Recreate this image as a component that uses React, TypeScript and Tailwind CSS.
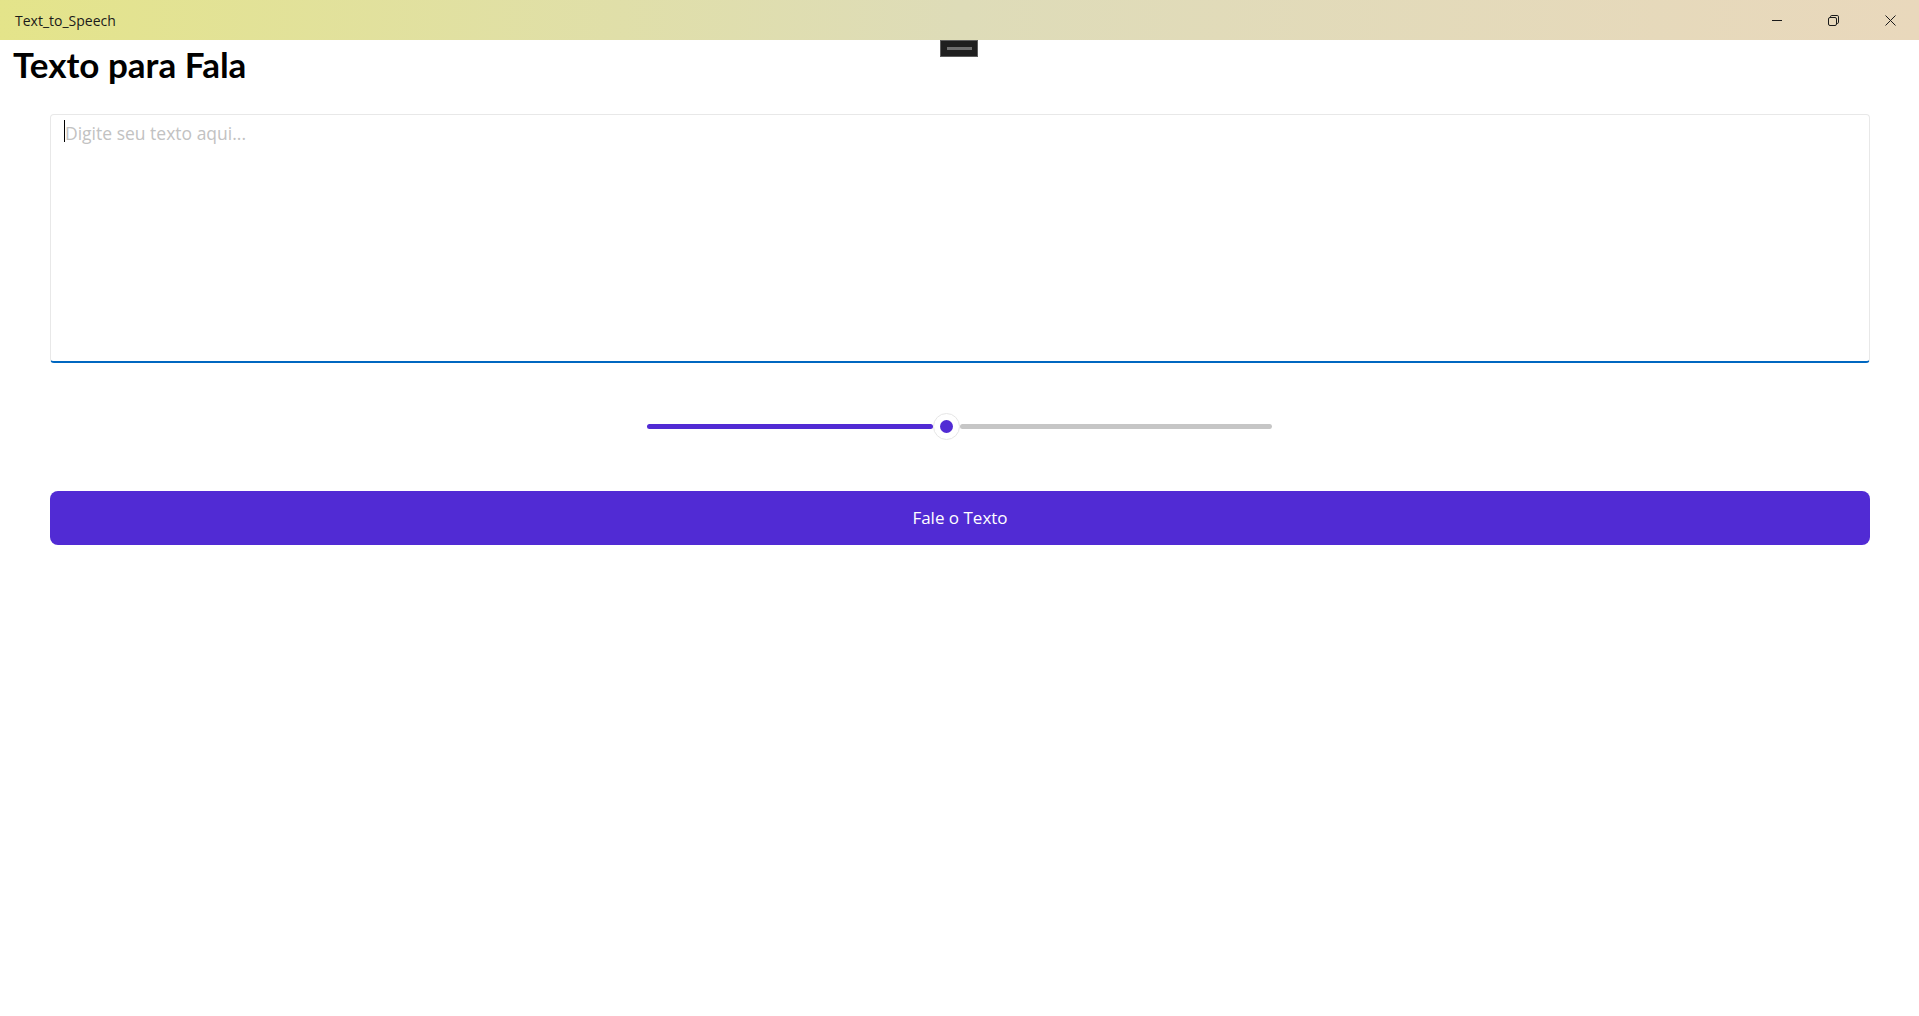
import { useState } from 'react'

function CaptionButtons() {
  return (
    <div className="flex h-full">
      {/* minimize */}
      <div className="w-[57px] h-full flex items-center justify-center">
        <svg width="10" height="10" viewBox="0 0 10 10">
          <line x1="0" y1="5.5" x2="10" y2="5.5" stroke="#1a1a1a" strokeWidth="1" />
        </svg>
      </div>
      {/* restore */}
      <div className="w-[57px] h-full flex items-center justify-center">
        <svg width="11" height="11" viewBox="0 0 11 11" fill="none">
          <rect x="0.5" y="2.5" width="8" height="8" rx="1.5" stroke="#1a1a1a" strokeWidth="1" />
          <path d="M2.5 2.5 V1.8 A1.3 1.3 0 0 1 3.8 0.5 H9.2 A1.3 1.3 0 0 1 10.5 1.8 V7.2 A1.3 1.3 0 0 1 9.2 8.5 H8.5" stroke="#1a1a1a" strokeWidth="1" />
        </svg>
      </div>
      {/* close */}
      <div className="w-[57px] h-full flex items-center justify-center">
        <svg width="11" height="11" viewBox="0 0 11 11">
          <path d="M0.5 0.5 L10.5 10.5 M10.5 0.5 L0.5 10.5" stroke="#1a1a1a" strokeWidth="1" />
        </svg>
      </div>
    </div>
  )
}

export default function App() {
  const [text, setText] = useState('')

  return (
    <div className="relative w-full h-screen bg-white flex flex-col overflow-hidden">
      {/* Title bar */}
      <div className="h-10 shrink-0 flex items-center justify-between bg-gradient-to-r from-[#e4e48a] via-[#dedcb8] to-[#e9d8bc]">
        <span className="pl-[15px] text-[14px] text-[#1a1a1a] font-['Open_Sans',sans-serif]">Text_to_Speech</span>
        <CaptionButtons />
      </div>

      {/* drag handle overlay */}
      <div className="absolute top-[40px] left-[940px] w-[38px] h-[17px] bg-[#1f1f1f] border border-[#5c5c5c] flex items-center justify-center">
        <div className="w-[25px] h-[3px] bg-[#6e6e6e]"></div>
      </div>

      {/* Heading */}
      <h1 className="mt-[7px] pl-[13px] text-[35px] leading-none font-bold text-black font-['Lato',sans-serif]">
        Texto para Fala
      </h1>

      {/* Text input */}
      <div className="relative mt-[32px] ml-[50px] mr-[49px] h-[249px]">
        <textarea
          value={text}
          onChange={(e) => setText(e.target.value)}
          placeholder="Digite seu texto aqui..."
          className="w-full h-full resize-none rounded-[4px] border border-[#e8e8e8] border-b-2 border-b-[#0067c0] pt-[6px] pl-[14px] pr-3 text-[17.5px] leading-[24px] text-black placeholder:text-[#c2c2c2] outline-none font-['Open_Sans',sans-serif]"
        />
        {text === '' && <div className="absolute left-[14px] top-[6px] w-px h-[22px] bg-black"></div>}
      </div>

      {/* Slider */}
      <div className="mt-[50px] flex justify-center">
        <div className="w-[625px] h-[27px] flex items-center">
          <div className="w-[286px] h-[5px] rounded-full bg-[#512bd4]"></div>
          <div className="w-[27px] h-[27px] rounded-full bg-white border border-[#e6e6e6] flex items-center justify-center">
            <div className="w-[13px] h-[13px] rounded-full bg-[#512bd4]"></div>
          </div>
          <div className="flex-1 h-[5px] rounded-full bg-[#c6c6c6]"></div>
        </div>
      </div>

      {/* Button */}
      <button className="mt-[51px] ml-[50px] mr-[49px] h-[54px] rounded-[8px] bg-[#512bd4] text-white text-[17px] font-['Open_Sans',sans-serif]">
        Fale o Texto
      </button>
    </div>
  )
}
